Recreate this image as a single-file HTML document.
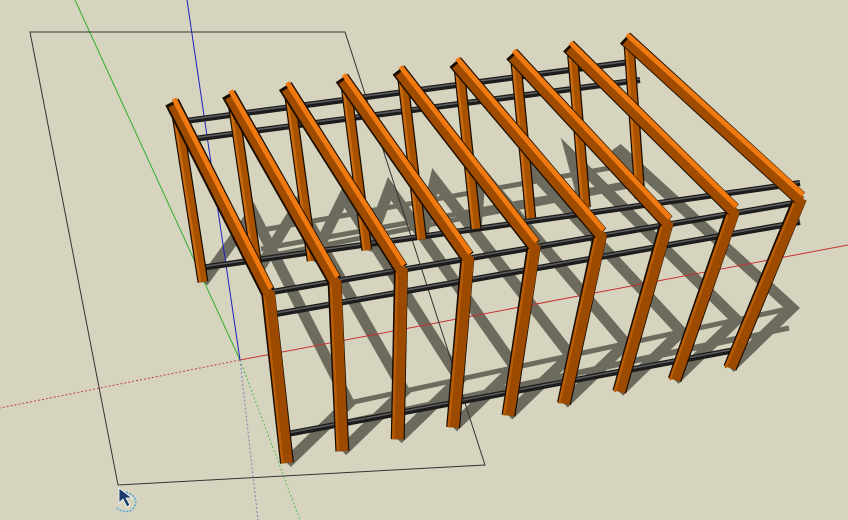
<!DOCTYPE html>
<html><head><meta charset="utf-8"><style>
html,body{margin:0;padding:0;background:#d6d4be;width:848px;height:520px;overflow:hidden}
svg{display:block}
</style></head><body>
<svg id="s" width="848" height="520" viewBox="0 0 848 520" xmlns="http://www.w3.org/2000/svg">
<rect width="848" height="520" fill="#d6d4be"/>
<g id="shadow"></g>
<line x1="240" y1="360" x2="0" y2="408" stroke="#c04040" stroke-width="1" stroke-dasharray="2,2"/>
<line x1="240" y1="360" x2="848" y2="245" stroke="#c83030" stroke-width="1"/>
<line x1="240" y1="360" x2="300" y2="520" stroke="#50c050" stroke-width="1" stroke-dasharray="2,2"/>
<line x1="240" y1="360" x2="258" y2="520" stroke="#8080c0" stroke-width="1" stroke-dasharray="2,2"/>
<line x1="75" y1="0" x2="240" y2="360" stroke="#30b030" stroke-width="1"/>
<line x1="187" y1="0" x2="240" y2="360" stroke="#2020c0" stroke-width="1"/>
<polygon points="30,32 345,32 485,465 118,485" fill="none" stroke="#333" stroke-width="1"/>
<g id="m"></g>
<path d="M119 488 L119 503 L123 499 L127 507 L130 505 L126 498 L132 498 Z" fill="#1a3a6a" stroke="#fff" stroke-width="0.8"/>
<path d="M126 492 Q142 498 132 510 Q124 514 117 508" fill="none" stroke="#3aa0e0" stroke-width="1.3" stroke-dasharray="2,1.5"/>
</svg>
<script>
var m=document.getElementById('m'),sh=document.getElementById('shadow'),NS='http://www.w3.org/2000/svg';
function L(p,a,b,c,w){var e=document.createElementNS(NS,'line');e.setAttribute('x1',a[0]);e.setAttribute('y1',a[1]);e.setAttribute('x2',b[0]);e.setAttribute('y2',b[1]);e.setAttribute('stroke',c);e.setAttribute('stroke-width',w);p.appendChild(e);}
function PL(p,pts,c,w){var e=document.createElementNS(NS,'polyline');e.setAttribute('points',pts.map(function(q){return q[0]+','+q[1]}).join(' '));e.setAttribute('fill','none');e.setAttribute('stroke',c);e.setAttribute('stroke-width',w);e.setAttribute('stroke-linejoin','miter');p.appendChild(e);}
function lp(a,b,t){return [a[0]+(b[0]-a[0])*t,a[1]+(b[1]-a[1])*t];}
function off(p,dx,dy){return [p[0]+dx,p[1]+dy];}
var N=9,S='#6c6b5e';
var Bs=[[172,102],[625,38]],Fs=[[268,292],[800,198]],FB=[[287,463],[730,368]],BB=[[203,282],[640,197]];
var frames=[];for(var i=0;i<N;i++){var t=i/8;frames.push({B:lp(Bs[0],Bs[1],t),F:lp(Fs[0],Fs[1],t),FB:lp(FB[0],FB[1],t),BB:lp(BB[0],BB[1],t)});}
// shadows
var sv=[62,-60],SAs=[],SBs=[];
for(var i=0;i<N;i++){var f=frames[i];
 var SA=off(f.FB,sv[0],sv[1]); var SB=[SA[0]+f.B[0]-f.F[0],SA[1]+f.B[1]-f.F[1]];
 SAs.push(SA);SBs.push(SB);
 PL(sh,[f.BB,SB,SA,f.FB],S,11);}
function sl(a,b,dx,dy){L(sh,off(a,dx,dy),off(b,dx,dy),S,5);}
sl(SAs[0],SAs[8],0,0);sl(SAs[0],SAs[8],-3,20);
sl(SBs[0],SBs[8],4,18);sl(SBs[0],SBs[8],8,36);
sl(frames[0].FB,frames[8].FB,8,-30);sl(frames[0].BB,frames[8].BB,4,-14);
// rods back
function rod(a,b){L(m,a,b,'#1c1c1c',6);L(m,off(a,0,-1),off(b,0,-1),'#5e5e5e',1.5);}
rod([178,122],[630,62]);rod([186,140],[640,80]);
rod([200,268],[800,183]);
// back legs
for(var i=N-1;i>=0;i--){var f=frames[i];L(m,off(f.B,4,6),f.BB,'#1a0d00',11);L(m,off(f.B,4,6),off(f.BB,0,0),'#a85200',8.5);L(m,off(f.B,1,6),off(f.BB,-3,0),'#c86a10',2.5);}
// front rods
rod([272,292],[800,202]);rod([276,314],[800,222]);rod([282,435],[735,350]);
// beams and front legs
for(var i=N-1;i>=0;i--){var f=frames[i];
 L(m,f.F,f.FB,'#1a0d00',14);L(m,off(f.F,1,0),f.FB,'#9c4a00',11.5);L(m,off(f.F,-4,0),off(f.FB,-4.5,0),'#b85c06',2.5);
 L(m,f.B,f.F,'#1a0d00',15);L(m,off(f.B,1,3),off(f.F,1,3),'#a04c00',10);L(m,off(f.B,2,-3.5),off(f.F,3,-3.5),'#f07a10',5);}
</script>
</body></html>
